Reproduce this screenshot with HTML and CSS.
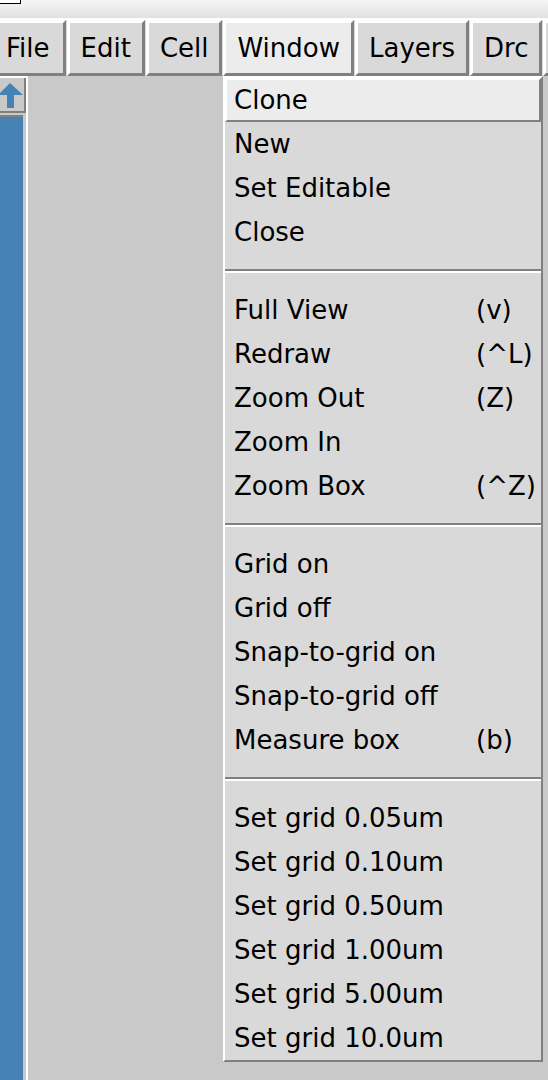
FILE: index.html
```html
<!DOCTYPE html>
<html>
<head>
<meta charset="utf-8">
<title>Window menu</title>
<link rel="stylesheet" href="styles.css">
</head>
<body>
<div class="app">
  <div class="titlebar"><div class="corner"></div></div>
  <div class="menubar">
    <div class="mbtn first">File</div>
    <div class="mbtn">Edit</div>
    <div class="mbtn">Cell</div>
    <div class="mbtn active">Window</div>
    <div class="mbtn">Layers</div>
    <div class="mbtn">Drc</div>
    <div class="mbtn stub"></div>
  </div>
  <div class="workarea">
    <div class="scrollbar">
      <div class="arrowbtn">
        <svg width="24" height="30" viewBox="0 0 24 30"><path d="M10 3 L23 15 L14 15 L14 28 L7 28 L7 15 L-2 15 Z" fill="#4682b4"/></svg>
      </div>
      <div class="slider"></div>
    </div>
    <div class="canvas"></div>
  </div>

  <div class="dropdown">
    <div class="item active"><span class="label">Clone</span></div>
    <div class="item"><span class="label">New</span></div>
    <div class="item"><span class="label">Set Editable</span></div>
    <div class="item"><span class="label">Close</span></div>
    <div class="sep"></div>
    <div class="item"><span class="label">Full View</span><span class="acc">(v)</span></div>
    <div class="item"><span class="label">Redraw</span><span class="acc">(^L)</span></div>
    <div class="item"><span class="label">Zoom Out</span><span class="acc">(Z)</span></div>
    <div class="item"><span class="label">Zoom In</span></div>
    <div class="item"><span class="label">Zoom Box</span><span class="acc">(^Z)</span></div>
    <div class="sep"></div>
    <div class="item"><span class="label">Grid on</span></div>
    <div class="item"><span class="label">Grid off</span></div>
    <div class="item"><span class="label">Snap-to-grid on</span></div>
    <div class="item"><span class="label">Snap-to-grid off</span></div>
    <div class="item"><span class="label">Measure box</span><span class="acc">(b)</span></div>
    <div class="sep"></div>
    <div class="item"><span class="label">Set grid 0.05um</span></div>
    <div class="item"><span class="label">Set grid 0.10um</span></div>
    <div class="item"><span class="label">Set grid 0.50um</span></div>
    <div class="item"><span class="label">Set grid 1.00um</span></div>
    <div class="item"><span class="label">Set grid 5.00um</span></div>
    <div class="item"><span class="label">Set grid 10.0um</span></div>
  </div>
</div>
</body>
</html>
```

FILE: styles.css
```css
html, body {
  margin: 0;
  padding: 0;
  width: 548px;
  height: 1080px;
  overflow: hidden;
  background: #c9c9c9;
}

.app {
  position: relative;
  width: 548px;
  height: 1080px;
  display: flex;
  flex-direction: column;
  font-family: "DejaVu Sans", sans-serif;
  font-size: 26px;
  color: #000;
  overflow: hidden;
}

.titlebar {
  height: 18px;
  flex: none;
  background: linear-gradient(#f6f6f6, #e0e0e0);
}

.corner {
  width: 20px;
  height: 3px;
  background: #fff;
  border-right: 1px solid #000;
  border-bottom: 1px solid #000;
}

.menubar {
  flex: none;
  height: 56px;
  border-top: 2px solid #fff;
  background: #d9d9d9;
  display: flex;
  gap: 1px;
  white-space: nowrap;
}

.mbtn {
  flex: none;
  height: 50px;
  line-height: 50px;
  padding: 0 11px;
  border: 3px solid;
  border-color: #fff #808080 #808080 #fff;
  background: #d9d9d9;
}

.mbtn.first {
  margin-left: -8px;
  padding-right: 13px;
}

.mbtn.active {
  background: #ececec;
}

.mbtn.stub {
  width: 20px;
}

.workarea {
  flex: 1;
  display: flex;
}

.scrollbar {
  flex: none;
  width: 26px;
  border-right: 2px solid #fff;
  border-top: 2px solid #fff;
  background: #c9c9c9;
  display: flex;
  flex-direction: column;
}

.arrowbtn {
  flex: none;
  height: 33px;
  width: 24px;
  border-right: 2px solid #808080;
  border-bottom: 2px solid #808080;
  background: #c9c9c9;
  overflow: hidden;
}

.arrowbtn svg {
  display: block;
  margin-top: 2px;
}

.slider {
  flex: 1;
  margin-top: 2px;
  width: 23px;
  border-top: 2px solid #808080;
  background: #4682b4;
}

.canvas {
  flex: 1;
  background: #c9c9c9;
}

.dropdown {
  position: absolute;
  left: 223px;
  top: 76px;
  width: 316px;
  border: 2px solid;
  border-color: #fff #808080 #808080 #fff;
  background: #d9d9d9;
}

.item {
  height: 40px;
  line-height: 40px;
  border: 2px solid transparent;
  padding-left: 7px;
  display: flex;
  white-space: nowrap;
}

.item.active {
  background: #ececec;
  border-color: #fff #808080 #808080 #fff;
}

.label {
  width: 242px;
  flex: none;
}

.acc {
  flex: none;
}

.sep {
  height: 34px;
  display: flex;
  flex-direction: column;
  justify-content: center;
}

.sep::before {
  content: "";
  display: block;
  height: 2px;
  background: #808080;
}

.sep::after {
  content: "";
  display: block;
  height: 2px;
  background: #fff;
}
```
